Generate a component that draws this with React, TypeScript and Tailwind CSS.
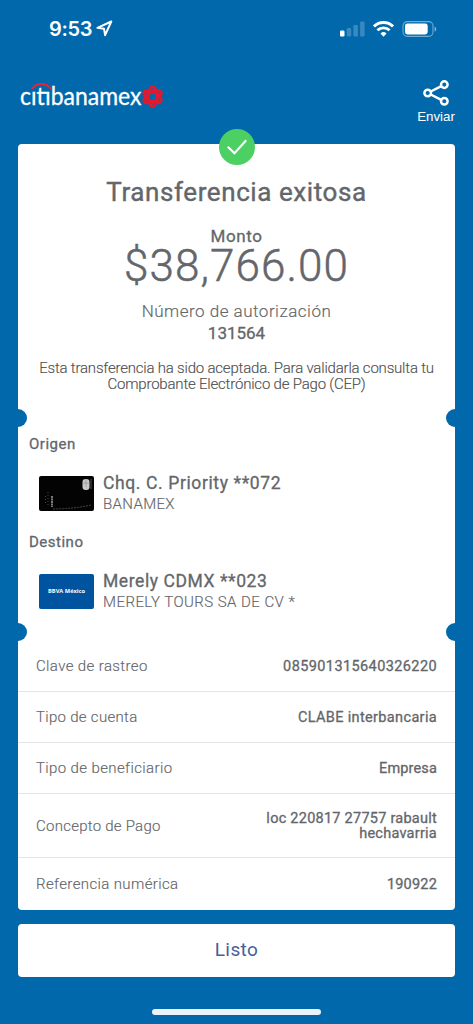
import type { ReactNode } from 'react';
import { clsx } from 'clsx';

interface Account {
  label: string;
  name: string;
  nameClass: string;
  holder: string;
  holderClass: string;
  card: ReactNode;
}

interface Detail {
  label: string;
  value: string;
  valueClass: string;
  labelClass: string;
  rowClass: string;
}

// Roboto has no step between 300/400/500, so a hairline stroke thickens the lighter face.
const semi = 'font-normal [-webkit-text-stroke:0.3px_currentColor]';
const book = 'font-light [-webkit-text-stroke:0.15px_currentColor]';

const details: Detail[] = [
  {
    label: 'Clave de rastreo',
    value: '085901315640326220',
    labelClass: 'tracking-[0.38px]',
    valueClass: 'tracking-[0.4px]',
    rowClass: 'h-[50px]',
  },
  {
    label: 'Tipo de cuenta',
    value: 'CLABE interbancaria',
    labelClass: 'tracking-[0.3px]',
    valueClass: 'tracking-[0.35px]',
    rowClass: 'h-[51px] border-t',
  },
  {
    label: 'Tipo de beneficiario',
    value: 'Empresa',
    labelClass: 'tracking-[0.38px]',
    valueClass: 'tracking-[0.15px]',
    rowClass: 'h-[51px] border-t',
  },
  {
    label: 'Concepto de Pago',
    value: 'loc 220817 27757 rabault hechavarria',
    labelClass: 'tracking-[0.25px]',
    valueClass: 'w-[180px] tracking-[0.25px]',
    rowClass: 'h-[64px] border-t',
  },
  {
    label: 'Referencia numérica',
    value: '190922',
    labelClass: 'tracking-[0.38px]',
    valueClass: 'tracking-[0.2px]',
    rowClass: 'h-[53px] border-t',
  },
];

function StatusBar() {
  return (
    <div className="flex h-[57px] items-center justify-between pr-[36px] pl-[49px] text-white">
      <div className="flex items-center gap-[4px]">
        <span className="font-['Inter',sans-serif] text-[20px] leading-6 font-semibold tracking-[-0.3px]">9:53</span>
        <svg width="17" height="17" viewBox="0 0 17 17" fill="none" stroke="currentColor" strokeWidth="2" strokeLinejoin="round">
          <path d="M15.3 1.5 1.4 7.8l6.6.9 1.1 6.5z" />
        </svg>
      </div>
      <div className="flex items-center gap-[8px]">
        <svg width="25" height="16" viewBox="0 0 25 16" fill="currentColor">
          <rect x="0" y="9.5" width="4.5" height="6" rx="1.2" />
          <rect x="6.7" y="7" width="4.5" height="8.5" rx="1.2" opacity=".22" />
          <rect x="13.4" y="4" width="4.5" height="11.5" rx="1.2" opacity=".22" />
          <rect x="20.1" y="0.5" width="4.5" height="15" rx="1.2" opacity=".22" />
        </svg>
        <svg width="21" height="16" viewBox="0 0 21 16" fill="none" stroke="currentColor" strokeWidth="2.9">
          <path d="M1 5.4a13.6 13.6 0 0 1 19 0M4.4 9.3a8.8 8.8 0 0 1 12.2 0" />
          <path d="M10.5 15.7 7.5 12.5a4.3 4.3 0 0 1 6 0z" fill="currentColor" stroke="none" />
        </svg>
        <svg width="35" height="16" viewBox="0 0 35 16" fill="none">
          <rect x="1" y="0.6" width="30" height="14.8" rx="4.3" stroke="white" strokeOpacity=".45" strokeWidth="1.1" />
          <rect x="3" y="2.6" width="22.7" height="10.8" rx="2.4" fill="white" />
          <path d="M32.6 5.4c2.2.8 2.2 4.4 0 5.2z" fill="white" fillOpacity=".5" />
        </svg>
      </div>
    </div>
  );
}

function Logo() {
  return (
    <svg width="144" height="30" viewBox="0 0 144 30" fill="none">
      <text x="0" y="24.500" fill="white" stroke="white" strokeWidth=".3" fontFamily="Lato, sans-serif" fontSize="25" textLength="121.500" lengthAdjust="spacingAndGlyphs">
        c&#305;t&#305;banamex
      </text>
      <path d="M12 9C16 2.500 26.500 2.500 31 9" stroke="#e0243a" strokeWidth="2.1" />
      {[0, 60, 120, 180, 240, 300].map((angle) => (
        <g key={angle} transform={`rotate(${angle} 132.600 16.700)`}>
          <circle cx="132.600" cy="9.800" r="4.200" fill="#e3192f" />
          <path d="M130.700 10.600q.5-2.900 3.300-2.200" stroke="#0168ac" strokeWidth=".7" />
        </g>
      ))}
      <circle cx="132.600" cy="16.700" r="4.300" stroke="#e3192f" strokeWidth="2.600" />
      <circle cx="132.600" cy="16.700" r="3" fill="#0168ac" />
    </svg>
  );
}

function ShareButton() {
  return (
    <button className="flex w-[50px] flex-col items-center text-white">
      <svg width="27" height="26" viewBox="0 0 27 26" fill="none" stroke="currentColor" strokeWidth="2.5">
        <circle cx="4.700" cy="13" r="3.300" />
        <circle cx="21.300" cy="4.600" r="3.300" />
        <circle cx="21.300" cy="21.300" r="3.300" />
        <path d="M7.700 11.500 18.300 6.100M7.700 14.500l10.600 5.300" />
      </svg>
      <span className="mt-[3px] font-['Liberation_Sans',sans-serif] text-[13.3px] leading-[16px]">Enviar</span>
    </button>
  );
}

function PriorityCard() {
  return (
    <svg width="55" height="35" viewBox="0 0 55 35">
      <rect width="55" height="35" rx="2" fill="#030303" />
      <rect x="43.500" y="3" width="7" height="11" rx="3" fill="#c9c9c9" />
      <path d="M43.500 7h7M47 3v8" stroke="#8b8b8b" strokeWidth=".6" />
      <path d="M52 3v10" stroke="#777" strokeWidth=".7" />
      <path d="M13 20v11" stroke="#bbb" strokeWidth="1.300" strokeDasharray="2 .5" />
      <path d="M9 16v15M6.500 20v9" stroke="#555" strokeWidth=".8" strokeDasharray="1 2" />
      <path d="M14 33q22-.3 38-4" fill="none" stroke="#555" strokeWidth=".8" strokeDasharray="2 1" />
    </svg>
  );
}

function BbvaCard() {
  return (
    <div className="flex h-[35px] w-[55px] items-center justify-center rounded-[2px] bg-[#00539f] font-['Open_Sans',sans-serif] text-[5.7px] font-bold whitespace-nowrap text-white">
      BBVA México
    </div>
  );
}

/** Ticket perforation: one half circle cut out of each side of the card. */
function Notches() {
  return (
    <div className="flex h-[18px] justify-between">
      <span className="w-[9px] rounded-r-full bg-[#0168ac]" />
      <span className="w-[9px] rounded-l-full bg-[#0168ac]" />
    </div>
  );
}

function AccountSection({ label, name, nameClass, holder, holderClass, card }: Account) {
  return (
    <section className="h-[98px]">
      <h2 className={clsx('pl-[11px] text-[15px] leading-[20px] tracking-[0.5px]', semi)}>{label}</h2>
      <div className="mt-[19px] flex gap-[9px] pl-[21px]">
        <div className="mt-[3px] shrink-0">{card}</div>
        <div>
          <p className={clsx('text-[17.5px] leading-[20px]', semi, nameClass)}>{name}</p>
          <p className={clsx('text-[15px] leading-[22px]', book, holderClass)}>{holder}</p>
        </div>
      </div>
    </section>
  );
}

export default function App() {
  return (
    <main className="flex h-[1024px] w-full flex-col bg-[#0168ac] font-['Roboto',sans-serif] text-[#63666a]">
      <StatusBar />
      <header className="flex h-[87px] items-start justify-between pt-[23px] pr-[12px] pl-[20px]">
        <Logo />
        <ShareButton />
      </header>

      <div className="relative mx-[18px] h-[766px] shrink-0 rounded-[4px] bg-white">
        <div className="absolute -top-[15px] left-1/2 flex size-[36px] -translate-x-1/2 items-center justify-center rounded-full bg-[#4cd064]">
          <svg width="20" height="16" viewBox="0 0 20 16" fill="none" stroke="white" strokeWidth="2.1">
            <path d="m.8 7.800 6.700 6.400L19.200 1.200" />
          </svg>
        </div>

        <div className="flex h-[265px] flex-col items-center pt-[30px] text-center">
          <h1 className="text-[26px] leading-[36px] font-normal tracking-[0.58px] [-webkit-text-stroke:0.4px_currentColor]">
            Transferencia exitosa
          </h1>
          <p className={clsx('mt-[16px] text-[17px] leading-[20px] tracking-[0.6px]', semi)}>Monto</p>
          <p className="text-[44px] leading-[41px] font-light tracking-[1.1px] [-webkit-text-stroke:0.5px_currentColor]">$38,766.00</p>
          <p className={clsx('mt-[13px] text-[17px] leading-[22px] tracking-[0.5px]', book)}>Número de autorización</p>
          <p className={clsx('text-[17px] leading-[22px]', semi)}>131564</p>
          <p className={clsx('mt-[17px] text-[15px] leading-[15.5px] tracking-[-0.2px] whitespace-nowrap text-[#505050]', book)}>
            Esta transferencia ha sido aceptada. Para validarla consulta tu
            <br />
            Comprobante Electrónico de Pago (CEP)
          </p>
        </div>

        <Notches />
        <div className="h-[196px] pt-[7px]">
          <AccountSection
            label="Origen"
            name="Chq. C. Priority **072"
            nameClass="tracking-[0.62px]"
            holder="BANAMEX"
            holderClass="tracking-[0.35px]"
            card={<PriorityCard />}
          />
          <AccountSection
            label="Destino"
            name="Merely CDMX **023"
            nameClass="tracking-[0.57px]"
            holder="MERELY TOURS SA DE CV *"
            holderClass="tracking-[0.45px]"
            card={<BbvaCard />}
          />
        </div>
        <Notches />

        <dl>
          {details.map((row) => (
            <div key={row.label} className={clsx('flex items-center justify-between border-[#e3e5e7] px-[18px]', row.rowClass)}>
              <dt className={clsx('text-[15px] leading-[18px]', book, row.labelClass)}>{row.label}</dt>
              <dd className={clsx('pt-[2px] text-right text-[14.5px] leading-[14.5px]', semi, row.valueClass)}>{row.value}</dd>
            </div>
          ))}
        </dl>
      </div>

      <button className="mx-[18px] mt-[14px] h-[53px] shrink-0 rounded-[4px] bg-white text-[19px] font-normal tracking-[0.4px] text-[#465f9b]">
        Listo
      </button>
      <div className="mx-auto mt-[32px] h-[6px] w-[169px] shrink-0 rounded-full bg-[#ebf2f8]" />
    </main>
  );
}
